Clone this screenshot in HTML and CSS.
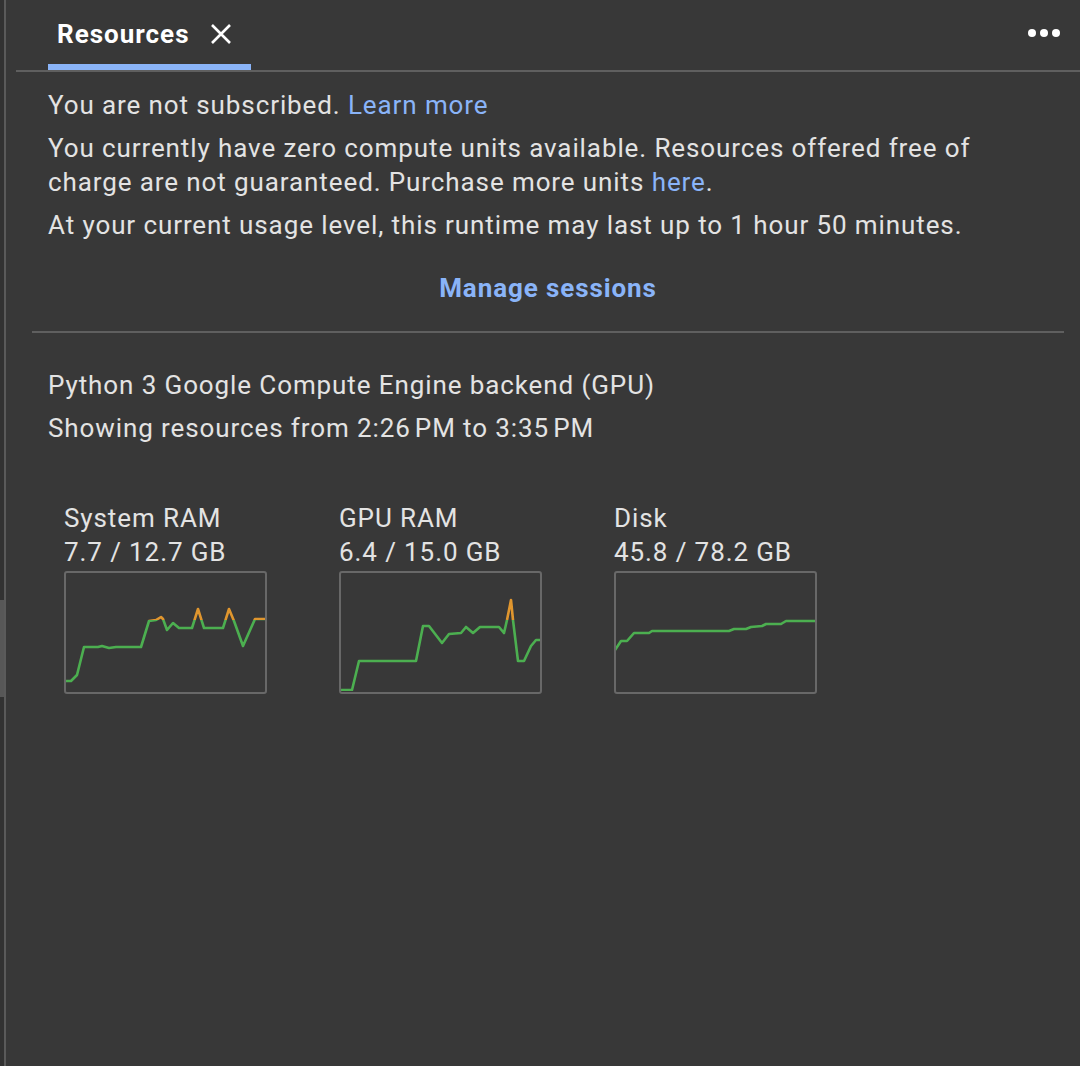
FILE: index.html
```html
<!DOCTYPE html>
<html>
<head>
<meta charset="utf-8">
<link rel="stylesheet" href="styles.css">
</head>
<body>
<div class="app">
  <div class="gutter"><div class="thumb"></div></div>
  <div class="panel">
    <div class="header">
      <div class="tab">
        <span class="tab-title">Resources</span>
        <svg class="close" width="22" height="22" viewBox="0 0 22 22"><path d="M2 2 L20 20 M20 2 L2 20" stroke="#ffffff" stroke-width="2.6" fill="none"/></svg>
      </div>
      <div class="more">
        <span class="dot"></span><span class="dot"></span><span class="dot"></span>
      </div>
    </div>
    <div class="content">
      <div class="info">
        <p>You are not subscribed. <a class="link">Learn more</a></p>
        <p>You currently have zero compute units available. Resources offered free of charge are not guaranteed. Purchase more units <a class="link">here</a>.</p>
        <p>At your current usage level, this runtime may last up to 1 hour 50 minutes.</p>
      </div>
      <div class="manage"><a class="link bold">Manage sessions</a></div>
      <div class="divider"></div>
      <div class="runtime">
        <p>Python 3 Google Compute Engine backend (GPU)</p>
        <p>Showing resources from 2:26&#8239;PM to 3:35&#8239;PM</p>
      </div>
      <div class="charts">
        <div class="chart">
          <div class="label">System RAM</div>
          <div class="label">7.7 / 12.7 GB</div>
          <div class="graph">
            <svg width="199" height="118" viewBox="2 2 199 118">
              <defs>
                <clipPath id="lo1"><rect x="0" y="49" width="210" height="80"/></clipPath>
                <clipPath id="hi1"><rect x="0" y="0" width="210" height="49"/></clipPath>
              </defs>
              <polyline clip-path="url(#lo1)" class="ln green" points="1,110 7,110 13,104 20,76 34,76 38,75 45,77 52,76 77,76 85,50 92,49 97,46 99,48 103,59 109,52 115,57 128,57 134,38 140,57 159,57 165,38 170,50 179,75 191,48 203,48"/>
              <polyline clip-path="url(#hi1)" class="ln orange" points="1,110 7,110 13,104 20,76 34,76 38,75 45,77 52,76 77,76 85,50 92,49 97,46 99,48 103,59 109,52 115,57 128,57 134,38 140,57 159,57 165,38 170,50 179,75 191,48 203,48"/>
            </svg>
          </div>
        </div>
        <div class="chart">
          <div class="label">GPU RAM</div>
          <div class="label">6.4 / 15.0 GB</div>
          <div class="graph">
            <svg width="199" height="118" viewBox="2 2 199 118">
              <defs>
                <clipPath id="lo2"><rect x="0" y="49" width="210" height="80"/></clipPath>
                <clipPath id="hi2"><rect x="0" y="0" width="210" height="49"/></clipPath>
              </defs>
              <polyline clip-path="url(#lo2)" class="ln green" points="0,119 13,119 20,90 77,90 84,55 90,55 103,72 110,63 122,62 127,56 134,62 141,56 160,56 165,62 168,49 172,29 174,49 179,90 185,90 192,75 197,69 203,69"/>
              <polyline clip-path="url(#hi2)" class="ln orange" points="0,119 13,119 20,90 77,90 84,55 90,55 103,72 110,63 122,62 127,56 134,62 141,56 160,56 165,62 168,49 172,29 174,49 179,90 185,90 192,75 197,69 203,69"/>
            </svg>
          </div>
        </div>
        <div class="chart">
          <div class="label">Disk</div>
          <div class="label">45.8 / 78.2 GB</div>
          <div class="graph">
            <svg width="199" height="118" viewBox="2 2 199 118">
              <polyline class="ln green" points="1,79 7,70 13,70 20,62 35,62 38,60 115,60 120,58 132,58 137,56 148,55 152,53 167,53 172,50 203,50"/>
            </svg>
          </div>
        </div>
      </div>
    </div>
  </div>
</div>
</body>
</html>
```

FILE: styles.css
```css
html, body {
  margin: 0;
  padding: 0;
  background: #383838;
}
body {
  font-family: Roboto, "Liberation Sans", sans-serif;
  color: #e3e3e3;
  width: 1080px;
  height: 1066px;
  overflow: hidden;
  letter-spacing: 0.9px;
}
.app {
  display: flex;
  height: 1066px;
}
.gutter {
  width: 4px;
  background: #323232;
  border-right: 2px solid #5a5a5a;
  flex: none;
}
.thumb {
  margin-top: 600px;
  height: 97px;
  background: #575757;
}
.panel {
  flex: 1;
  display: flex;
  flex-direction: column;
}
.header {
  margin-left: 10px;
  height: 70px;
  border-bottom: 2px solid #5f5f5f;
  display: flex;
  align-items: flex-end;
  justify-content: space-between;
  padding-left: 32px;
  padding-right: 20px;
}
.tab {
  width: 203px;
  height: 70px;
  box-sizing: border-box;
  border-bottom: 6px solid #8ab4f8;
  display: flex;
  align-items: center;
  padding-left: 9px;
  padding-top: 4px;
}
.tab-title {
  font-size: 26px;
  font-weight: 700;
  color: #ffffff;
  letter-spacing: 1px;
  margin-right: 20px;
}
.close {
  display: block;
}
.more {
  display: flex;
  gap: 4px;
  height: 70px;
  align-items: center;
  padding-bottom: 4px;
  box-sizing: border-box;
}
.dot {
  width: 8px;
  height: 8px;
  border-radius: 50%;
  background: #ffffff;
}
.content {
  padding: 16px 16px 0 26px;
}
.info {
  padding-left: 16px;
  padding-right: 60px;
}
p {
  margin: 0 0 9px 0;
  font-size: 26px;
  line-height: 34px;
}
.link {
  color: #8ab4f8;
  text-decoration: none;
}
.bold {
  font-weight: 700;
}
.manage {
  text-align: center;
  font-size: 26px;
  line-height: 34px;
  margin-top: 29px;
}
.divider {
  margin-top: 26px;
  height: 2px;
  background: #5f5f5f;
}
.runtime {
  padding-left: 16px;
  margin-top: 35px;
}
.charts {
  display: flex;
  gap: 72px;
  padding-left: 32px;
  margin-top: 56px;
}
.chart {
  width: 203px;
}
.label {
  font-size: 26px;
  line-height: 34px;
  white-space: nowrap;
}
.graph {
  margin-top: 2px;
  width: 203px;
  height: 123px;
  box-sizing: border-box;
  border: 2px solid #686868;
  border-radius: 3px;
  overflow: hidden;
}
.graph svg {
  display: block;
}
.ln {
  fill: none;
  stroke-width: 2.6;
  stroke-linejoin: round;
}
.green {
  stroke: #4caf50;
}
.orange {
  stroke: #e0962e;
}
```
